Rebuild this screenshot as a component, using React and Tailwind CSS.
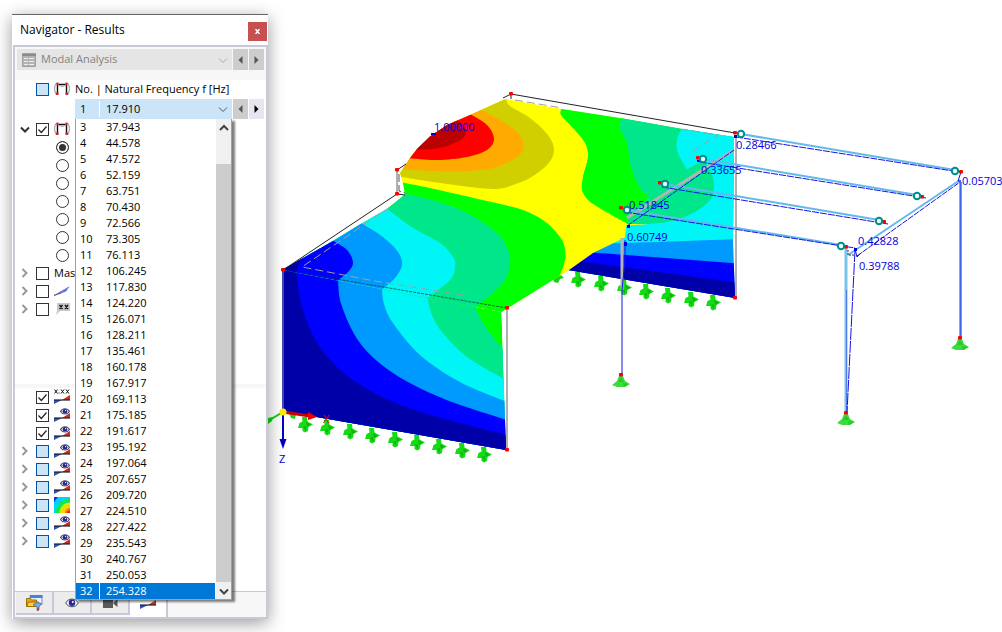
import React, { useState } from 'react';

const FREQUENCIES = [
  [3, '37.943'], [4, '44.578'], [5, '47.572'], [6, '52.159'], [7, '63.751'],
  [8, '70.430'], [9, '72.566'], [10, '73.305'], [11, '76.113'], [12, '106.245'],
  [13, '117.830'], [14, '124.220'], [15, '126.071'], [16, '128.211'], [17, '135.461'],
  [18, '160.178'], [19, '167.917'], [20, '169.113'], [21, '175.185'], [22, '191.617'],
  [23, '195.192'], [24, '197.064'], [25, '207.657'], [26, '209.720'], [27, '224.510'],
  [28, '227.422'], [29, '235.543'], [30, '240.767'], [31, '250.053'], [32, '254.328'],
];

// result colour scale, low to high
const C = {
  navy: '#0000a8', blue: '#0000ff', sky: '#009aff', cyan: '#00f6f6', teal: '#00e68a',
  green: '#00ff00', yellow: '#ffff00', olive: '#d0d000', orange: '#ffaa00', red: '#ff0000', dark: '#bb0000',
};

/* ---------- small icons ---------- */

function FrameIcon() {
  return (
    <svg width="16" height="16" viewBox="0 0 16 16" fill="none">
      <path d="M2.500 2C0 5 0 10 2.500 14M13.500 2c2.500 3 2.500 8 0 12" stroke="#8c8c8c" />
      <path d="M3.500 13.500V3.500h9v10" stroke="#111" strokeWidth="1.400" />
      <path d="M4 3.500Q8 8 12 3.500" stroke="#b5b5b5" />
      <path d="M2.500 1.500h2v2.500h-2zM11.500 1.500h2v2.500h-2zM2 11.500h2.500v2.500H2zM11.500 11.500H14v2.500h-2.500z" fill="#c8282c" />
    </svg>
  );
}

function Wedge({ y = 11 }) {
  return (
    <g>
      <path d={`M0 ${y}h8L0 ${y + 4}z`} fill="#2a52c0" />
      <path d={`M16 ${y}H8l8 -5z`} fill="#c8321e" />
      <path d={`M0 ${y}h16`} stroke="#222" strokeWidth="1.200" />
    </g>
  );
}

function Eye() {
  return (
    <g>
      <path d="M6.500 4.500C8.500 .8 13.500 .8 15.500 4.500 13.500 7.800 8.500 7.800 6.500 4.500z" fill="#e8ecff" stroke="#46467c" strokeWidth="1.100" />
      <circle cx="11" cy="4.200" r="2.300" fill="#26267c" />
      <circle cx="11.600" cy="3.600" r=".7" fill="#fff" />
    </g>
  );
}

function EyeWedgeIcon() {
  return (
    <svg width="16" height="16" viewBox="0 0 16 16">
      <Wedge />
      <Eye />
    </svg>
  );
}

function ValueWedgeIcon() {
  return (
    <svg width="16" height="16" viewBox="0 0 16 16">
      <Wedge />
      <path d="M.5 .5l3 4m0-4l-3 4M7 .5l3 4m0-4l-3 4M12 .5l3 4m0-4l-3 4M5 3.500v1" stroke="#111" />
    </svg>
  );
}

function ContourIcon() {
  return (
    <svg width="16" height="16" viewBox="0 0 16 16">
      <path d="M0 0h16v16H0z" fill="#00d2ff" />
      <path d="M0 0h4L0 5z" fill="#1432dc" />
      <path d="M16 1.500C8 1.500 1.500 8 1.500 16H16z" fill="#14e65a" />
      <path d="M16 5.500C10 5.500 5.500 10 5.500 16H16z" fill="#c8f000" />
      <path d="M16 8c-5 0-8 3-8 8h8z" fill="#ffd200" />
      <path d="M16 11c-3 0-5 2-5 5h5z" fill="#ff7800" />
      <path d="M16 13.500c-2 0-3 1-3 2.500h3z" fill="#e61e1e" />
    </svg>
  );
}

function WingIcon() {
  return (
    <svg width="16" height="16" viewBox="0 0 16 16">
      <path d="M4 10L15.500 3.500 12 8.500 5 11z" fill="#5a6eff" />
      <path d="M0 12.500L15 4" stroke="#8c8cb4" />
      <path d="M0 12.500l7-2.500" stroke="#555" />
    </svg>
  );
}

function FlagIcon() {
  return (
    <svg width="16" height="16" viewBox="0 0 16 16">
      <path d="M3 2h13v8H6l-4 4 1-4z" fill="#c8c8c8" />
      <path d="M5.500 4l3 4m0-4l-3 4M11 4l3 4m0-4l-3 4" stroke="#111" strokeWidth="1.300" />
    </svg>
  );
}

function TableIcon() {
  return (
    <svg width="14" height="14" viewBox="0 0 14 14" fill="none">
      <path d="M.5 .5h13v13H.5z" fill="#b4b4b4" stroke="#a0a0a0" />
      <path d="M0 2h14" stroke="#8c8c8c" strokeWidth="2" />
      <path d="M2 5.500h4M7 5.500h5M2 8.500h4M7 8.500h5M2 11.500h4M7 11.500h5" stroke="#ececec" />
    </svg>
  );
}

function FolderIcon() {
  return (
    <svg width="17" height="16" viewBox="0 0 17 16">
      <path d="M4 .5h12v9H4z" fill="#e8f0fa" stroke="#6e96c8" />
      <path d="M4 0h12.500v3H4z" fill="#4682dc" />
      <path d="M.5 3.500h4l1 1.500h5v6H.5z" fill="#e6aa14" stroke="#9c6c08" />
      <path d="M2.500 7h10l-2 4.500h-10z" fill="#ffd23c" stroke="#9c6c08" />
      <path d="M7 9.500q4-3.500 8.500-1L13 12v3l-2 .5V12z" fill="#78aae6" stroke="#4668a0" strokeWidth=".7" />
      <path d="M11 13l2-1v3l-2 1z" fill="#d23c28" />
    </svg>
  );
}

function EyeIcon() {
  return (
    <svg width="14" height="12" viewBox="0 0 14 12">
      <path d="M.7 6C3.500 .8 10.500 .8 13.300 6 10.500 11 3.500 11 .7 6z" fill="#fff" stroke="#3c3c64" />
      <circle cx="7" cy="5.700" r="3.300" fill="#28288c" />
      <circle cx="7.800" cy="5" r="1" fill="#fff" />
    </svg>
  );
}

function CameraIcon() {
  return (
    <svg width="15" height="10" viewBox="0 0 15 10" fill="#5a5a5a">
      <path d="M0 0h10v10H0zM10.500 4.500L14.500 1v8L10.500 6z" />
    </svg>
  );
}

function Chevron({ dir = 'down', color = '#333', strokeWidth = 1.6 }) {
  const d = { down: 'M1 3.500l4 4 4-4', up: 'M1 7l4-4 4 4', right: 'M2.500 1l4 4-4 4' }[dir];
  return (
    <svg width="10" height="10" viewBox="0 0 10 10" fill="none" className="shrink-0">
      <path d={d} stroke={color} strokeWidth={strokeWidth} />
    </svg>
  );
}

function Arrow({ left }) {
  return (
    <svg width="5" height="8" viewBox="0 0 5 8" fill="currentColor">
      <path d={left ? 'M4.500 0v8L.5 4z' : 'M.5 0v8l4-4z'} />
    </svg>
  );
}

/* ---------- navigator ---------- */

function CheckBox({ checked, partial, label }) {
  const [on, setOn] = useState(!!checked);
  return (
    <span className="relative h-[13px] w-[13px] shrink-0">
      <input
        type="checkbox"
        aria-label={label}
        checked={on}
        onChange={() => setOn(!on)}
        className={`block h-[13px] w-[13px] appearance-none border ${partial ? 'border-[#0055a5] bg-[#cce4f7]' : 'border-[#333] bg-white'}`}
      />
      {on && (
        <svg width="13" height="13" viewBox="0 0 13 13" fill="none" className="pointer-events-none absolute inset-0">
          <path d="M2.500 6.500l2.800 3 5.200-6" stroke="#222" strokeWidth="1.200" />
        </svg>
      )}
    </span>
  );
}

function TreeRow({ arrow, icon, text, ...box }) {
  return (
    <div className="flex h-[18px] items-center gap-[5px] pl-[5px]">
      <span className="flex w-[11px] shrink-0">
        {arrow && <Chevron dir={arrow} color={arrow === 'down' ? '#333' : '#999'} strokeWidth={2} />}
      </span>
      <CheckBox {...box} />
      {icon}
      {text && <span>{text}</span>}
    </div>
  );
}

function StepButtons({ active }) {
  return (
    <>
      <button type="button" aria-label="Previous" className="flex w-[15px] items-center justify-center bg-[#cdcdcd] text-[#555]">
        <Arrow left />
      </button>
      <button
        type="button"
        aria-label="Next"
        className={`flex w-[15px] items-center justify-center ${active ? 'bg-[#e6e6f0] text-black' : 'bg-[#cdcdcd] text-[#555]'}`}
      >
        <Arrow />
      </button>
    </>
  );
}

function FrequencyList() {
  const [selected, setSelected] = useState(32);
  return (
    <div className="absolute top-full left-0 z-10 flex w-full border border-t-0 border-[#a0a0a0] bg-white shadow-[3px_2px_2px_rgba(0,0,0,0.5)]">
      <ul role="listbox" aria-label="Natural frequencies" className="flex-1">
        {FREQUENCIES.map(([no, value]) => (
          <li
            key={no}
            role="option"
            aria-selected={no === selected}
            onClick={() => setSelected(no)}
            className={`flex h-4 items-center leading-4 ${no === selected ? 'bg-[#0078d7] text-white' : 'text-black'}`}
          >
            <span className="w-[23px] pl-1">{no}</span>
            <span className="h-full border-l border-white pl-[6px]">{value}</span>
          </li>
        ))}
      </ul>
      {/* scroll bar */}
      <div className="ml-px flex w-[15px] flex-col bg-[#f0f0f0]">
        <button type="button" aria-label="Scroll up" className="flex h-[17px] items-center justify-center">
          <Chevron dir="up" color="#444" strokeWidth={2} />
        </button>
        <div className="mt-7 flex-1 bg-[#cdcdcd]" />
        <button type="button" aria-label="Scroll down" className="flex h-[17px] items-center justify-center">
          <Chevron color="#444" strokeWidth={2} />
        </button>
      </div>
    </div>
  );
}

function Tab({ active, label, children }) {
  return (
    <button
      type="button"
      aria-label={label}
      className={`flex w-[38px] items-center justify-center border-r-2 border-[#c8c8d6] ${active ? 'h-[25px] bg-white' : 'h-[23px] border-b-2 bg-[#ececec]'}`}
    >
      {children}
    </button>
  );
}

function Navigator() {
  const [shape, setShape] = useState(0);
  return (
    <aside className="relative z-10 mt-[14px] ml-3 w-64 shrink-0 border-t border-[#666] bg-white text-[11px] text-black shadow-[0_4px_16px_rgba(0,0,0,0.4)]">
      <header className="flex h-[30px] items-center justify-between pr-px pl-2">
        <h1 className="text-[12px]">Navigator - Results</h1>
        <button type="button" aria-label="Close" className="mt-[3px] flex h-[19px] w-[19px] items-center justify-center bg-[#c75050]">
          <svg width="5" height="5" viewBox="0 0 5 5">
            <path d="M.5 0l4 5m0-5l-4 5" stroke="#fff" strokeWidth="1.500" />
          </svg>
        </button>
      </header>

      <div className="ml-px border-2 border-[#c8c8d6]">
        <div className="flex gap-px bg-[#f7f7f7] px-[2px] pt-[2px] pb-[10px]">
          <div className="relative flex h-[21px] flex-1 items-center bg-[#e5e5e5] pl-[5px] text-[#828282]">
            <TableIcon />
            <select
              disabled
              aria-label="Analysis"
              className="h-full flex-1 appearance-none bg-transparent pl-[5px] text-[11px] opacity-100"
            >
              <option>Modal Analysis</option>
            </select>
            <span className="pointer-events-none pr-1">
              <Chevron color="#aaa" strokeWidth={1} />
            </span>
          </div>
          <StepButtons />
        </div>

        <div className="pb-[66px]">
          <TreeRow
            partial
            label="Mode shape"
            icon={<FrameIcon />}
            text={<label htmlFor="frequency" className="whitespace-nowrap">No. | Natural Frequency f [Hz]</label>}
          />
          <div className="my-px flex h-5 gap-px pr-[2px] pl-[60px]">
            <div className="relative flex flex-1 items-center bg-[#cce4f7]">
              <span className="w-6 pl-[5px]">1</span>
              <select id="frequency" className="h-4 flex-1 appearance-none border-l border-white pl-[6px] leading-4">
                <option>17.910</option>
              </select>
              <span className="pointer-events-none pr-1">
                <Chevron color="#555" strokeWidth={1} />
              </span>
              <FrequencyList />
            </div>
            <StepButtons active />
          </div>
          <TreeRow arrow="down" checked label="Mode shapes" icon={<FrameIcon />} />
          {[0, 1, 2, 3, 4, 5, 6].map((i) => (
            <div key={i} className="flex h-[18px] items-center pl-[41px]">
              <input
                type="radio"
                name="shape"
                aria-label={`Component ${i + 1}`}
                checked={shape === i}
                onChange={() => setShape(i)}
                className="h-[13px] w-[13px] appearance-none rounded-full border border-[#333] bg-white checked:bg-[#333] checked:shadow-[inset_0_0_0_2px_white]"
              />
            </div>
          ))}
          <TreeRow arrow="right" label="Masses" text="Mas" />
          <TreeRow arrow="right" label="Members" icon={<WingIcon />} />
          <TreeRow arrow="right" label="Values" icon={<FlagIcon />} />
        </div>

        <div className="h-1 bg-[#f7f7f7]" />

        <div className="pb-[41px]">
          <TreeRow checked label="Result values" icon={<ValueWedgeIcon />} />
          <TreeRow checked label="Display 1" icon={<EyeWedgeIcon />} />
          <TreeRow checked label="Display 2" icon={<EyeWedgeIcon />} />
          <TreeRow arrow="right" partial label="Display 3" icon={<EyeWedgeIcon />} />
          <TreeRow arrow="right" partial label="Display 4" icon={<EyeWedgeIcon />} />
          <TreeRow arrow="right" partial label="Display 5" icon={<EyeWedgeIcon />} />
          <TreeRow arrow="right" partial label="Contours" icon={<ContourIcon />} />
          <TreeRow arrow="right" partial label="Display 6" icon={<EyeWedgeIcon />} />
          <TreeRow arrow="right" partial label="Display 7" icon={<EyeWedgeIcon />} />
        </div>

        <nav className="flex items-start border-t border-[#c8c8d6] bg-[#f7f7f7] pl-px">
          <Tab label="Data"><FolderIcon /></Tab>
          <Tab label="Display"><EyeIcon /></Tab>
          <Tab label="Views"><CameraIcon /></Tab>
          <Tab label="Results" active>
            <svg width="16" height="10" viewBox="0 6 16 10"><Wedge /></svg>
          </Tab>
        </nav>
      </div>
    </aside>
  );
}

/* ---------- model view ---------- */

// Catmull-Rom through the points, written as cubic segments
function curve(pts) {
  let d = `M${pts[0][0]} ${pts[0][1]}`;
  for (let i = 0; i < pts.length - 1; i++) {
    const p0 = pts[i - 1] || pts[i];
    const p1 = pts[i];
    const p2 = pts[i + 1];
    const p3 = pts[i + 2] || p2;
    d += `C${p1[0] + (p2[0] - p0[0]) / 6} ${p1[1] + (p2[1] - p0[1]) / 6} ${p2[0] - (p3[0] - p1[0]) / 6} ${p2[1] - (p3[1] - p1[1]) / 6} ${p2[0]} ${p2[1]}`;
  }
  return d;
}

const BACK_WALL = 'M507 99L562 109 623 118.500 682 129 734 137 733 240 735 298 568 270 560 275 500 240 500 150z';
const ROOF = 'M282 270L333 241 360 224.500 387 209 405 194.500 403 183 400 173 410 158 417 149 430 136.500 447 125 470 115 503 100 507 99 590 150 600 206 613 216 626.500 223 625 237.500 593 253 569 270 501.500 312z';
const FRONT_WALL = 'M282 270L501.500 312 506 450 282 411z';

// each band: fill, contour points, straight closing part
const BACK_BANDS = [
  [C.green, [[562, 108], [561, 115], [573, 128], [585, 143], [588, 157], [583, 177], [582, 190], [588, 200], [598, 207], [613, 216], [628, 224]], 'L740 224 740 120z'],
  [C.teal, [[623, 117], [619.5, 127], [627, 143], [631, 167], [640, 188], [650, 197]], 'L627 214 627 224 740 224 740 120z'],
  [C.cyan, [[682, 128], [677, 140], [678, 153], [687, 169.5]], 'L703 160 740 160 740 120z'],
  [C.cyan, [[703, 160], [711, 172], [714, 187], [710, 200], [693, 213], [667, 222], [627, 225.5]], 'L600 245 740 245 740 150z'],
];
const ROOF_BANDS = [
  [C.olive, [[506, 98], [510, 106], [530, 118], [548, 135], [554, 150], [548, 164], [530, 178], [513, 185], [497, 189], [470, 187], [437, 182.5], [398, 176.5]], 'L390 90z'],
  [C.orange, [[479, 109], [500, 120], [518, 133], [523.5, 147], [517, 157], [497, 167], [475, 170.5], [450, 171.5], [398, 169.5]], 'L390 90z'],
  [C.red, [[468, 113], [487, 125], [494, 139], [487, 150], [467, 157], [437, 160], [406, 158]], 'L390 90z'],
  [C.dark, [[456, 119], [465, 128], [464, 137], [450, 145], [433, 149], [412, 149.5]], 'L390 90z'],
  [C.green, [[400, 182], [437, 189.5], [480, 199.5], [513, 207], [530, 213], [547, 223], [562, 240], [565.5, 255], [563, 267], [559, 277]], 'L502 320 282 320 282 200z'],
  [C.teal, [[403, 193], [437, 201.5], [467, 213], [497, 233], [508, 250], [510, 263], [505, 280], [493, 293], [475, 307.5]], 'L282 320 282 200z'],
  [C.cyan, [[386, 208], [413, 228], [440, 243], [453, 257], [455, 267], [450, 280], [427, 298.5]], 'L282 320 282 200z'],
  [C.sky, [[361, 223], [383, 237], [398, 252], [402, 265], [395, 278], [382, 289.5]], 'L282 320 282 200z'],
  [C.blue, [[332, 240], [347, 250], [353, 262], [349, 271], [338, 280.5]], 'L282 320 282 200z'],
  [C.navy, [[305, 256], [299, 264], [296, 273]], 'L282 320 282 256z'],
];
const FRONT_BANDS = [
  [C.teal, [[475, 307], [485, 326], [503, 349]]],
  [C.cyan, [[427.5, 298], [432, 315], [442, 332], [467, 357], [504, 379]]],
  [C.sky, [[382, 289], [384, 304], [393, 323], [420, 355], [460, 382], [506, 401.5]]],
  [C.blue, [[338, 280], [341.5, 305], [360, 343], [393, 373], [443, 398.5], [507, 420]]],
  [C.navy, [[296, 272], [303, 310], [320, 347], [353, 380], [410, 408.5], [507, 435]]],
];

const NODES = [
  [511, 94], [397, 170], [397, 194], [283, 270], [507, 308], [507, 450], [735, 298],
  [735, 133], [698, 158], [660, 183], [621, 208], [961, 172], [922, 197], [884, 222],
  [846, 247], [621, 375], [846, 413], [960, 338],
];
const HINGES = [[741, 134], [703, 159], [665, 184], [627, 210], [955, 171], [917, 196], [879, 221], [841, 246]];
const SUPPORTS = [
  [305, 424], [327, 427], [350, 431], [372, 435], [395, 439], [417, 442], [439, 446], [462, 450], [484, 454],
  [578, 279], [601, 283], [624, 287], [646, 291], [668, 295], [691, 299], [713, 302],
];
const VALUES = [
  ['1.00000', 434, 131], ['0.28466', 736, 149], ['0.33655', 701, 174], ['0.51845', 629, 209],
  ['0.60749', 627, 241], ['0.05703', 962, 185], ['0.42828', 858, 245], ['0.39788', 859, 270],
];

function Bands({ bands, close }) {
  return bands.map(([fill, pts, end], i) => <path key={i} d={curve(pts) + (end || close)} fill={fill} />);
}

function Support({ x, y }) {
  return (
    <g transform={`translate(${x} ${y})`}>
      <path d="M-3-7L2-7 2.500-2.500 8 .5 3.500 3 3 7 0 8.500-2.500 7-2.500 4-7 4-5.500-1-2.500-2.500z" fill="#14dc14" />
      <path d="M1-2L6 .5 2 3zM-2 3l3-1v5z" fill="#12b412" />
    </g>
  );
}

function Foot({ x, y }) {
  return (
    <g transform={`translate(${x} ${y})`}>
      <path d="M-2 1h4l2 5 5 3-5 3h-8l-5-2 5-4z" fill="#3cdc3c" />
      <path d="M0 2l3 5h-6zM2 8l6 1-5 3z" fill="#28c828" />
    </g>
  );
}

function ModelView() {
  return (
    <svg viewBox="268 0 734 632" className="block min-w-0 flex-1" role="img" aria-label="Mode shape">
      <defs>
        <clipPath id="back"><path d={BACK_WALL} /></clipPath>
        <clipPath id="roof"><path d={ROOF} /></clipPath>
        <clipPath id="front"><path d={FRONT_WALL} /></clipPath>
      </defs>

      {SUPPORTS.map(([x, y]) => <Support key={x} x={x} y={y} />)}
      <path d="M553 279l8-4 3 3-4 1-2 4-4-1zM289 413l7 1-1 5-4-1z" fill="#14d214" />

      {/* far wall */}
      <g clipPath="url(#back)">
        <path d={BACK_WALL} fill={C.yellow} />
        <Bands bands={BACK_BANDS} />
        <path d="M560 244L627 243 740 239V320H560z" fill={C.sky} />
        <path d="M560 248.500L593 252.500 740 263.500V320H560z" fill={C.blue} />
        <path d="M560 257.500L580 261.500 740 283V320H560z" fill={C.navy} />
      </g>

      {/* roof */}
      <g clipPath="url(#roof)">
        <path d="M282 90H570L575 130 588 155 583 177 582 190 590 201 640 230V320H282z" fill={C.yellow} />
        <Bands bands={BACK_BANDS.slice(0, 1)} />
        <Bands bands={ROOF_BANDS} />
      </g>

      {/* near wall */}
      <g clipPath="url(#front)">
        <path d={FRONT_WALL} fill={C.green} />
        <Bands bands={FRONT_BANDS} close="L506 460 270 420 270 262z" />
      </g>

      {/* undeformed edges */}
      <g fill="none">
        <path d="M397 194V170M507 308V450M736 135V298" stroke="#b0b0b0" strokeWidth="2" />
        <path d="M283 270V411" stroke="#8c8cc8" />
        <path d="M283 270L397 194 405 195M397 170L406 164M503 98L511 94 735 133M511 94V99" stroke="#222" />
        <path d="M283 270L507 308" stroke="#003c3c" strokeDasharray="3 1" strokeOpacity=".7" />
        <path d="M399 174V191L405 193" stroke="#555" strokeDasharray="8 3" />
        <path d="M390 207L302 267 375 281 468 296" stroke="#a0a0a0" strokeDasharray="8 4" />
        <path d="M515 100L562 108M693 151L718 135 682 129" stroke="#a0a0a0" strokeDasharray="8 4" />
        <path d="M627 218L734 150" stroke="#b4b4b4" strokeWidth="3" />
        <path d="M622 238V290" stroke="#b4b4b4" strokeWidth="3" />
      </g>

      {/* frame members */}
      <g fill="none">
        <path d="M741 134L955 170M703 159L917 195M665 184L879 220M627 210L841 245M848 255L960 180M960 180V338" stroke="#64b9eb" strokeWidth="2" />
        <path d="M846 248V413" stroke="#78c3eb" strokeWidth="3" />
        <g stroke="#1414e6">
          <path d="M736 137L953 171M700 162L926 198M662 187L888 224M625 212L855 248" strokeDasharray="7 1" />
          <path d="M627 226L734 150M857 256L960 182" strokeDasharray="6 1" />
          <path d="M961 172L958 181H961M855 249L857 257 860 254M625 240V260L622 290V375M961 182V338" />
          <path d="M846.500 290V413" strokeOpacity=".4" />
          <path d="M855 250L847 413" strokeDasharray="12 1" />
        </g>
        <path d="M848 250v5h7" stroke="#333" strokeDasharray="2 1" />
      </g>
      <path d="M624 242h3v4h-3zM627 225h3v3h-3zM854 248h3v3h-3zM431 133h5v2h-5zM734 135h3v3h-3zM697 160h3v2h-3z" fill="#0000dc" />

      {[[621, 375], [846, 413], [960, 338]].map(([x, y]) => <Foot key={x} x={x} y={y} />)}
      {NODES.map(([x, y]) => <rect key={`${x}-${y}`} x={x - 2} y={y - 2} width="4" height="3.500" rx="1" fill="#ff0000" />)}
      {HINGES.map(([x, y]) => <circle key={x} cx={x} cy={y} r="3.200" fill="#e6ffff" stroke="#008c8c" strokeWidth="2" />)}

      {/* axes */}
      <path d="M283 412L268 421" stroke="#00dc00" strokeWidth="2" />
      <path d="M268 418l5-1-1 4-4 3z" fill="#00dc00" />
      <path d="M283 412L310 416" stroke="#c80000" strokeWidth="3" />
      <path d="M308 412L317 417 308 420z" fill="#f00000" />
      <path d="M283 414V441" stroke="#0000c8" strokeWidth="2" />
      <path d="M279.500 439h7L283 449z" fill="#0000c8" />
      <circle cx="283" cy="412" r="3.500" fill="#ffeb00" />

      <g className="text-[11px]" fill="#0000dc">
        {VALUES.map(([text, x, y]) => <text key={text} x={x} y={y}>{text}</text>)}
        <text x="279" y="463">Z</text>
        <text x="323" y="423" fill="#f00000">X</text>
      </g>
    </svg>
  );
}

export default function App() {
  return (
    <main className="flex min-h-screen items-start overflow-hidden bg-white font-['Open_Sans','Noto_Sans',sans-serif]">
      <Navigator />
      <ModelView />
    </main>
  );
}
